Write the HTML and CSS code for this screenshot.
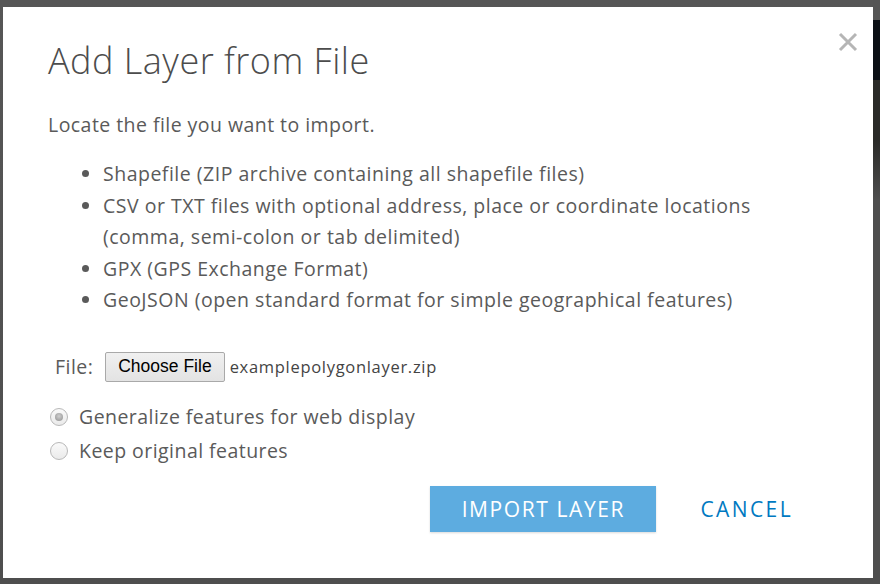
FILE: index.html
```html
<!DOCTYPE html>
<html>
<head>
<meta charset="utf-8">
<link rel="stylesheet" href="styles.css">
</head>
<body>
<div class="screen">
  <div class="dialog">
    <button class="close" aria-label="Close">
      <svg width="20" height="20" viewBox="0 0 20 20"><path d="M2 2 L18 18 M18 2 L2 18" stroke="#b5b5b5" stroke-width="3" fill="none"/></svg>
    </button>
    <h1 class="title">Add Layer from File</h1>
    <p class="intro">Locate the file you want to import.</p>
    <ul class="formats">
      <li>Shapefile (ZIP archive containing all shapefile files)</li>
      <li>CSV or TXT files with optional address, place or coordinate locations (comma, semi-colon or tab delimited)</li>
      <li>GPX (GPS Exchange Format)</li>
      <li>GeoJSON (open standard format for simple geographical features)</li>
    </ul>
    <div class="file-row">
      <span class="file-label">File:</span>
      <span class="choose">Choose File</span>
      <span class="file-name">examplepolygonlayer.zip</span>
    </div>
    <div class="options">
      <label class="option"><span class="radio checked"></span>Generalize features for web display</label>
      <label class="option"><span class="radio"></span>Keep original features</label>
    </div>
    <div class="actions">
      <span class="btn-import">IMPORT LAYER</span>
      <span class="btn-cancel">CANCEL</span>
    </div>
  </div>
  <div class="edge"></div>
</div>
</body>
</html>
```
FILE: styles.css
```css
html, body {
  margin: 0;
  padding: 0;
}
body {
  background: #4b4b4b;
  width: 880px;
  height: 584px;
  overflow: hidden;
  font-family: "Open Sans", Lato, sans-serif;
}
.screen {
  display: flex;
  padding: 7px 0 0 3px;
  height: 584px;
  box-sizing: border-box;
  background: linear-gradient(#565656, #4e4e4e);
}
.dialog {
  position: relative;
  width: 870px;
  height: 571px;
  background: #fff;
  box-sizing: border-box;
  padding: 33px 45px 0 45px;
  color: #5a5a5a;
}
.edge {
  width: 7px;
  height: 577px;
  margin-top: -7px;
  background: linear-gradient(#555 0 20px, #0b1015 20px 80px, #2a2a28 80px 140px, #4e4e4e 200px);
}
.close {
  position: absolute;
  top: 25px;
  right: 15px;
  border: 0;
  padding: 0;
  background: none;
  width: 20px;
  height: 20px;
}
.close svg { display: block; }
.title {
  margin: 0;
  font-weight: 300;
  font-size: 36px;
  letter-spacing: 0.5px;
  line-height: 42px;
  color: #4c4c4c;
}
.intro {
  margin: 30px 0 0 0;
  font-size: 19.5px;
  letter-spacing: 0.45px;
  line-height: 26px;
}
.formats {
  margin: 20px 0 0 0;
  padding: 0 0 0 55px;
  font-size: 19.5px;
  letter-spacing: 0.5px;
  line-height: 31.5px;
  width: 665px;
}
.file-row {
  display: flex;
  align-items: center;
  margin: 36px 0 0 7px;
  height: 30px;
}
.file-label {
  font-size: 19.5px;
  letter-spacing: 0.45px;
  margin-right: 12px;
}
.choose {
  font-family: "Liberation Sans", Arial, sans-serif;
  font-size: 17.5px;
  color: #000;
  background: linear-gradient(#f0f0f0, #e3e3e3);
  border: 1px solid #a9a9a9;
  border-radius: 2px;
  height: 30px;
  box-sizing: border-box;
  padding: 0 12px;
  display: flex;
  align-items: center;
  margin-right: 5px;
}
.file-name {
  font-size: 16.5px;
  letter-spacing: 0.7px;
  color: #444;
}
.options {
  display: flex;
  flex-direction: column;
  gap: 8px;
  margin-top: 22px;
}
.option {
  display: flex;
  align-items: center;
  font-size: 19.5px;
  letter-spacing: 0.45px;
  line-height: 26px;
  margin-left: 2px;
}
.radio {
  width: 16px;
  height: 16px;
  border-radius: 50%;
  border: 1px solid #b8b8b8;
  background: linear-gradient(#fafafa, #eaeaea);
  margin-right: 11px;
  position: relative;
}
.radio.checked::after {
  content: "";
  position: absolute;
  left: 4px;
  top: 4px;
  width: 8px;
  height: 8px;
  border-radius: 50%;
  background: radial-gradient(circle at 50% 40%, #cfcfcf, #8f8f8f);
}
.actions {
  display: flex;
  justify-content: flex-end;
  align-items: center;
  margin-top: 22px;
  padding-right: 35px;
}
.btn-import {
  width: 226px;
  height: 46px;
  background: #5dace0;
  color: #fff;
  font-size: 21px;
  letter-spacing: 1.6px;
  display: flex;
  align-items: center;
  justify-content: center;
  box-shadow: 0 1px 2px rgba(0,0,0,0.15);
}
.btn-cancel {
  margin-left: 44px;
  color: #0079c1;
  font-size: 21px;
  letter-spacing: 2.4px;
}
```
